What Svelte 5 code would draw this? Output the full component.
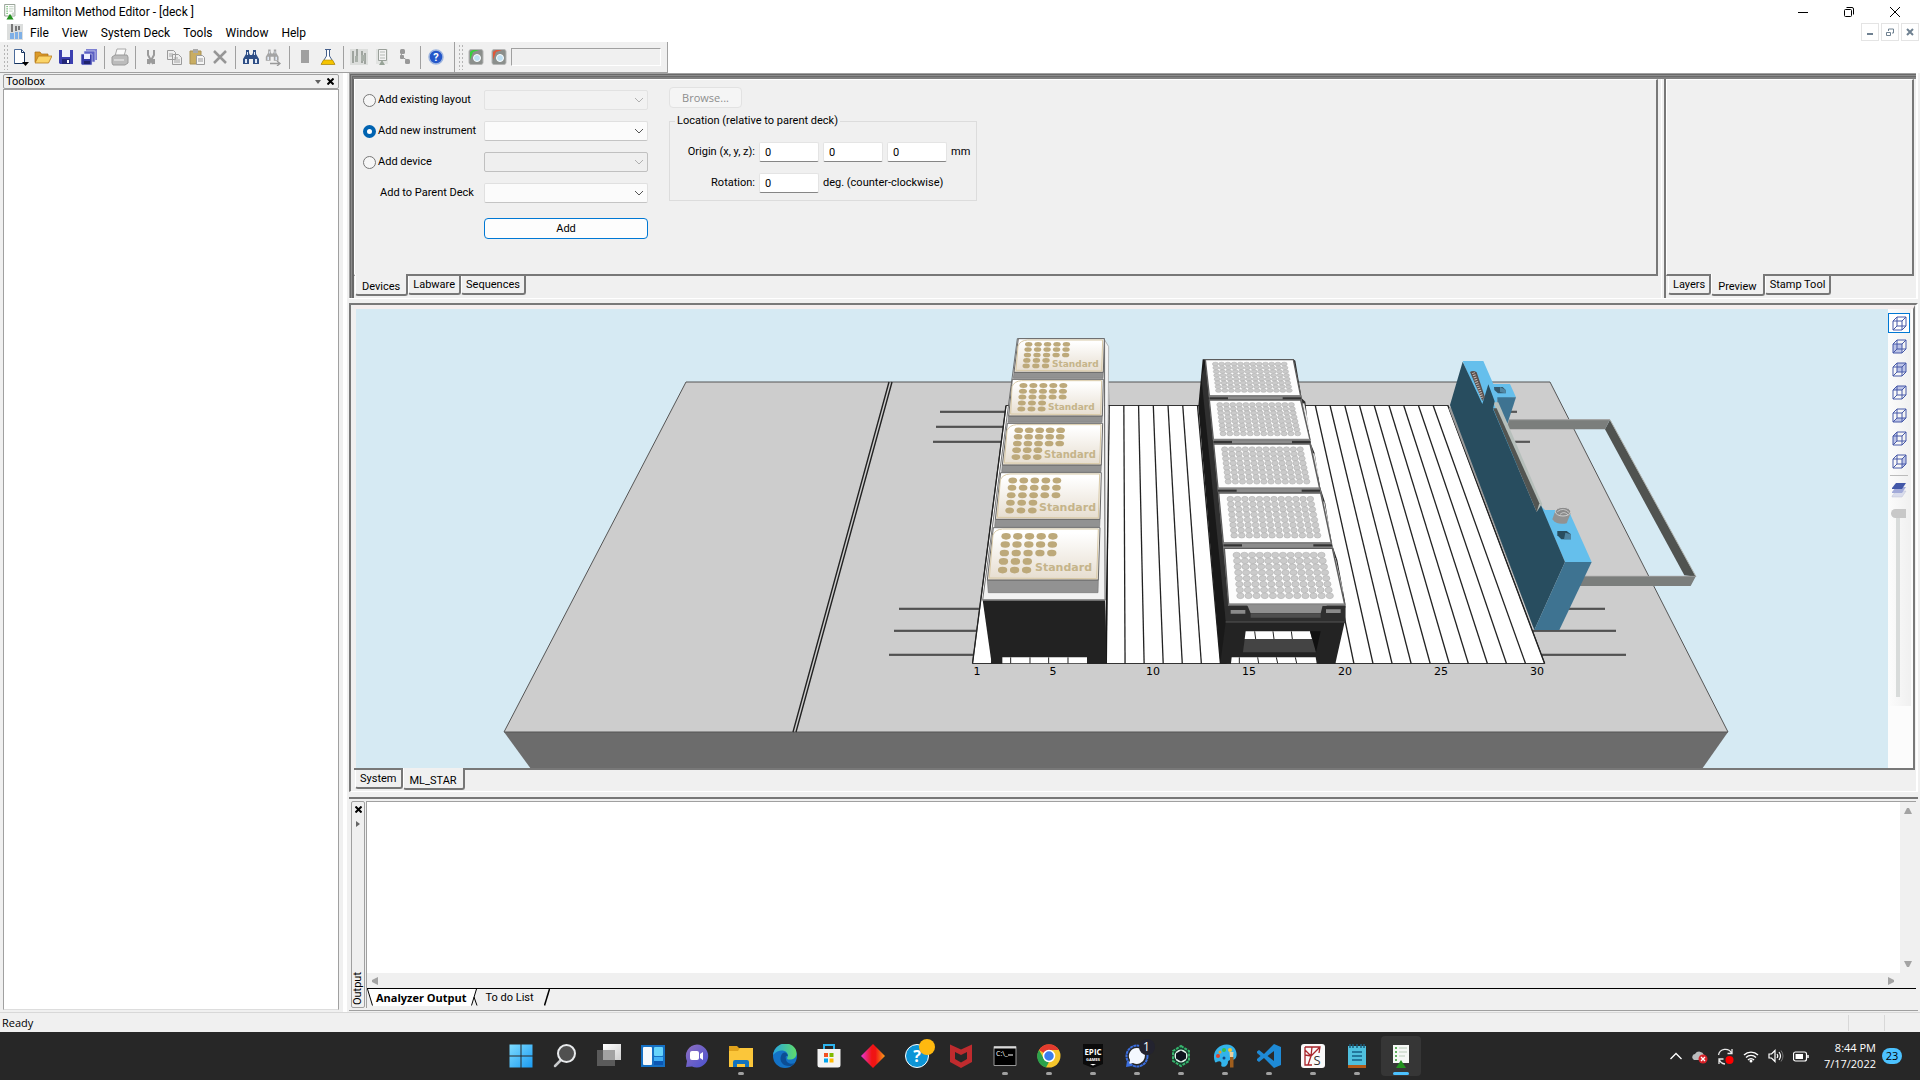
<script>
  const menus = ['File', 'View', 'System Deck', 'Tools', 'Window', 'Help'];

  const lerp = (a, b, t) => a + (b - a) * t;
  // corner order: top-left, top-right, bottom-right, bottom-left
  function at(q, u, v) {
    return {
      x: lerp(lerp(q[0], q[2], u), lerp(q[6], q[4], u), v),
      y: lerp(q[1], q[5], v)
    };
  }
  const pts = (q) => q.join(' ');

  const tipRacks = [
    { q: [175, 56, 433, 56, 430, 157, 162, 157], b: 175, rx: 11, ry: 7, tx: 1052, ty: 367, fs: 9 },
    { q: [157, 178, 430, 178, 427, 288, 146, 288], b: 307, rx: 12, ry: 7.5, tx: 1048, ty: 410, fs: 9 },
    { q: [142, 310, 428, 310, 424, 435, 127, 435], b: 455, rx: 13, ry: 8.5, tx: 1044, ty: 458, fs: 10 },
    { q: [122, 458, 424, 458, 420, 598, 106, 598], b: 620, rx: 13, ry: 9, tx: 1039, ty: 511, fs: 11 },
    { q: [100, 623, 420, 623, 415, 780, 82, 780], b: 818, rx: 14, ry: 10, tx: 1035, ty: 571, fs: 11 }
  ].map((r) => {
    const dots = [];
    [0.166, 0.322, 0.484, 0.645, 0.81].forEach((v, row) => {
      for (let c = 0; c < (row < 3 ? 5 : 3); c++) dots.push(at(r.q, 0.128 + c * 0.109, v));
    });
    return { ...r, dots };
  });

  const plates = [
    { q: [736, 119, 1000, 119, 1022, 228, 748, 228], rx: 9, ry: 5.5 },
    { q: [748, 240, 1022, 240, 1050, 359, 760, 359], rx: 9, ry: 6.5 },
    { q: [761, 372, 1050, 372, 1079, 505, 774, 505], rx: 9.5, ry: 7.5 },
    { q: [776, 519, 1082, 519, 1114, 669, 790, 669], rx: 10, ry: 8 },
    { q: [793, 685, 1117, 685, 1154, 853, 806, 853], rx: 11, ry: 8.5 }
  ].map((p) => {
    const wells = [];
    for (let r = 0; r < 8; r++)
      for (let c = 0; c < 12; c++) wells.push(at(p.q, 0.108 + c * 0.0708, 0.12 + r * 0.104));
    return { ...p, wells };
  });

  const tracks = Array.from({ length: 31 }, (_, i) => ({ a: 1006 + i * 14.73, b: 972.5 + i * 19.07 }));
  const labels = [[1, 977], [5, 1053], [10, 1153], [15, 1249], [20, 1345], [25, 1441], [30, 1537]];
  const rails = [
    [940, 1005, 412], [936, 1003, 427], [933, 1001, 442], [899, 980, 609], [894, 976, 631], [889, 973, 655],
    [1505, 1517, 412], [1515, 1530, 442], [1568, 1605, 609], [1533, 1616, 631], [1542, 1626, 655]
  ];
  const faces = [
    '', '1,5 10,5 10,14 1,14', '5,1 14,1 14,10 5,10', '1,5 5,1 14,1 10,5',
    '1,14 5,10 14,10 10,14', '1,5 5,1 5,10 1,14', '10,5 14,1 14,10 10,14'
  ];
  const views = ['Perspective', 'Front', 'Back', 'Top', 'Bottom', 'Left', 'Right'];
  const tasks = [
    'start', 'search', 'desktops', 'widgets', 'chat', 'files', 'edge', 'store', 'diamond', 'help', 'mcafee',
    'terminal', 'chrome', 'epic', 'signal', 'hex', 'paint', 'code', 'spyder', 'notepad', 'editor'
  ];
  const running = new Set(['files', 'terminal', 'chrome', 'epic', 'signal', 'hex', 'paint', 'code', 'spyder', 'notepad', 'editor']);
  const tools = [
    'new', 'open', 'save', 'saveall', '|', 'print', '|', 'cut', 'copy', 'paste', 'delete', '|', 'find', 'findnext',
    '|', 'stop', 'flask', '|', 'tubes', 'method', 'flow', '|', 'help'
  ];
  let choice = $state('instrument');
</script>

{#snippet combo(id, label, kind)}
  <span class="combo {kind}">
    <select {id} aria-label={label} disabled={kind !== ''}><option></option></select>
    <svg width="10" height="6" viewBox="0 0 10 6"><path d="M1 1l4 4 4-4" fill="none" stroke="currentColor" /></svg>
  </span>
{/snippet}

{#snippet toolIcon(n)}
  <svg width="18" height="18" viewBox="0 0 18 18" aria-hidden="true">
    {#if n === 'new'}
      <path d="M3.5 1.5h7l3 3v11h-10z" fill="#fff" stroke="#4b6b9b" /><path d="M10.5 1.5v3h3v11h-10" fill="none" stroke="#16325c" /><path d="M11 14h7l-3.500 4z" fill="#000" />
    {:else if n === 'open'}
      <path d="M1 14V4h5l1.500 2H14v8z" fill="#dc9a28" stroke="#a86a12" stroke-width=".7" /><path d="M1 15l3.500-7H18l-3.500 7z" fill="#fbd468" stroke="#b67a1c" stroke-width=".8" />
    {:else if n === 'save'}
      <path d="M2 2h14v14H3l-1-1z" fill="#3b3fb0" /><path d="M5 2h8v7H5z" fill="#eef1fb" /><path d="M5 11h8v5H5z" fill="#242878" /><path d="M10 12h2v3h-2z" fill="#fff" />
    {:else if n === 'saveall'}
      <path d="M6 1h11v11H6z" fill="#7d80d2" /><path d="M4 3h11v11H4z" fill="#5c60c4" stroke="#dfe0f6" stroke-width=".6" /><path d="M1 6h11v11H2l-1-1z" fill="#3439a6" stroke="#dfe0f6" stroke-width=".6" /><path d="M4 6h6v5H4z" fill="#eef" /><path d="M4 13h6v3H4z" fill="#20246c" />
    {:else if n === 'print'}
      <path d="M6 1h9l-2 7H4z" fill="#fafafa" stroke="#a8a8a8" /><path d="M1 9l3-2h12l1 2v6l-3 2H2l-1-2z" fill="#bcbcbc" stroke="#9a9a9a" /><path d="M3 12h10" stroke="#f4f4f4" />
    {:else if n === 'cut'}
      <path d="M6 2v5l5 9M12 2v5l-5 9" fill="none" stroke="#9b9b9b" stroke-width="2" /><path d="M5 11h3v5H5zM10 11h3v5h-3z" fill="#9b9b9b" />
    {:else if n === 'copy'}
      <path d="M2.500 2.500h6l2 2v7h-8zM7.500 6.500h6l3 3v7h-9z" fill="#eee" stroke="#9b9b9b" /><path d="M4 6h4M4 8h3M9 10h4M9 12h6M9 14h6" stroke="#a5a5a5" />
    {:else if n === 'paste'}
      <path d="M2 3h11v13H2z" fill="#c9ad62" stroke="#a79055" /><path d="M5 1h5v4H5z" fill="#a9a9a9" /><path d="M8.500 7.500h6l2 2v7h-8z" fill="#f5f5f5" stroke="#9b9b9b" /><path d="M10 11h5M10 13h5" stroke="#999" />
    {:else if n === 'delete'}
      <path d="M3 3l12 12M15 3L3 15" stroke="#969696" stroke-width="2.500" />
    {:else if n === 'find' || n === 'findnext'}
      <g fill={n === 'find' ? '#2f4f86' : '#a4a4a4'} transform={n === 'find' ? '' : 'scale(.8)'}><path d="M4 2h3v3l1 2h2l1-2V2h3v4l3 5v5h-6v-5H7v5H1v-5l3-5z" /><path d="M3 11h2v4H3zM13 11h2v4h-2zM5 4h1v3H5zM12 4h1v3h-1z" fill="#dfe8f6" /></g>
      {#if n === 'findnext'}<path d="M5 15.500h9M12 13l3 2.500-3 2.500" fill="none" stroke="#999" stroke-width="1.300" />{/if}
    {:else if n === 'stop'}
      <path d="M5 2h8v13H5z" fill="#a0a0a0" />
    {:else if n === 'flask'}
      <path d="M6 1.500h6M7.500 2v6l-5 8h13l-5-8V2" fill="#fff" stroke="#45608c" /><path d="M4.500 12h9l2.500 4.500H2z" fill="#f5c400" stroke="#b38a00" stroke-width=".6" />
    {:else if n === 'tubes'}
      <path d="M0 1h18v16H0z" fill="#dcdedc" /><path d="M3 3v12M7 1v12M12 3v12M15 5v11" stroke="#8b918b" stroke-width="1.500" /><path d="M5 8h3v6H5zM11 7h4v6h-4z" fill="#a9b0a9" />
    {:else if n === 'method'}
      <path d="M3 1h12v15H3z" fill="#e2e4e2" /><path d="M5.500 1.500h8v11h-8z" fill="#f3f3f3" stroke="#9aa09a" /><path d="M7 4h5M7 7h5M7 10h5" stroke="#b5bab5" /><path d="M6 17l3-5 3 5z" fill="#97a397" />
    {:else if n === 'flow'}
      <path d="M6 4l-1 4 7 5" stroke="#989898" fill="none" /><rect x="4" y="1" width="5" height="5" rx="1.500" fill="#989898" /><rect x="4" y="7" width="4" height="4" rx="1" fill="#989898" /><rect x="9" y="11" width="5" height="5" rx="1.500" fill="#989898" />
    {:else if n === 'help'}
      <circle cx="9" cy="9" r="7" fill="#2457c9" stroke="#9fb6df" stroke-width="1.500" /><text x="9" y="13" text-anchor="middle" font-size="11" font-weight="700" fill="#fff">?</text>
    {:else}
      <rect x="2" y="1.500" width="14" height="15" rx="2" fill="#8b8f8c" stroke="#b5b5b5" /><path d="M3 12V4l3-2h6L6 4z" fill={n === 'go' ? '#36d13b' : '#e0573a'} /><circle cx="10" cy="10" r="3.500" fill="#bfe0f2" stroke="#fff" />
    {/if}
  </svg>
{/snippet}

{#snippet docIcon(s)}
  <svg width={s} height={s} viewBox="0 0 18 18" aria-hidden="true">
    <path d="M3 .5h11.500v13H3z" fill="#fff" stroke="#8a968a" /><path d="M5 3h1.500M5 5.500h1.500M5 8h1.500M5 10.500h1.500" stroke="#2e9a2e" /><path d="M8 3h5M8 5.500h5M8 8h4" stroke="#b9cbb9" /><path d="M11 10l3-1v5h-3z" fill="#cfd6cf" /><path d="M5 17.500L9 11l4 6.500z" fill="#23921f" />
  </svg>
{/snippet}

{#snippet taskIcon(n)}
  <svg width="24" height="24" viewBox="0 0 24 24" aria-hidden="true">
    {#if n === 'start'}
      <path d="M.5.5h11v11H.5zM12.500.5h11v11h-11zM.5 12.500h11v11H.5zM12.500 12.500h11v11h-11z" fill="url(#win)" />
    {:else if n === 'search'}
      <path d="M2 22l7-7" stroke="#c8cacc" stroke-width="2.500" stroke-linecap="round" /><circle cx="13.500" cy="9.500" r="8.500" fill="#505050" stroke="#e8eaec" stroke-width="2" />
    {:else if n === 'desktops'}
      <path d="M6 0h18v16H6z" fill="url(#pale)" /><path d="M0 6h18v16H0z" fill="#686868" opacity=".8" /><path d="M6 6h12v10H6z" fill="#a2a2a2" />
    {:else if n === 'widgets'}
      <path d="M0 1h24v22H0z" fill="#1570c4" /><rect x="2" y="3" width="9" height="18" rx="1" fill="#f4f8fc" /><rect x="13" y="3" width="9" height="9" rx="1" fill="#66d3fb" /><rect x="13" y="13" width="9" height="4" fill="#3fb0f6" /><rect x="13" y="17" width="9" height="4" fill="#0b56b3" />
    {:else if n === 'chat'}
      <path d="M12 .5A11.500 11.500 0 1 1 7 22.500L1 23l1-6A11.500 11.500 0 0 1 12 .5z" fill="url(#chat)" /><rect x="5" y="7" width="9" height="9" rx="2" fill="#fff" /><path d="M15 10l3-2v8l-3-2z" fill="#fff" />
    {:else if n === 'files'}
      <path d="M0 2h8l2 2h14v19H0z" fill="#e0a21c" /><path d="M0 7h9l2-3h13v19H0z" fill="#fbc63a" /><path d="M4 23v-5a2 2 0 0 1 2-2h12a2 2 0 0 1 2 2v5h-4v-3H8v3z" fill="#1173c0" />
    {:else if n === 'edge'}
      <circle cx="12" cy="12" r="12" fill="#1372c6" /><path d="M0 11C2-2 17-4 22.500 5c3 7-1 11-7 10.500-2-.5-1.500-2-.5-3.500 0-6-9-8-15-1z" fill="url(#edge)" /><path d="M8 12c-2 5 2 11 10 10l4-3c-4 2-9 0-9-4-1-2 0-4 2-3-1-4-5-5-7 0z" fill="#0c4d94" />
    {:else if n === 'store'}
      <path d="M7 5V1h10v4" fill="none" stroke="#2db4ee" stroke-width="2" /><path d="M.5 5h23v16a2.500 2.500 0 0 1-2.500 2.500H3A2.500 2.500 0 0 1 .5 21z" fill="#f3f3f3" /><path d="M7 9h4v4H7z" fill="#f25022" /><path d="M12.500 9h4v4h-4z" fill="#7fba00" /><path d="M7 14.500h4v4H7z" fill="#00a4ef" /><path d="M12.500 14.500h4v4h-4z" fill="#ffb900" />
    {:else if n === 'diamond'}
      <path d="M12 0l12 12-12 12L0 12z" fill="url(#dia)" />
    {:else if n === 'help'}
      <circle cx="12" cy="12" r="11.500" fill="#0d95d6" stroke="#fff" /><text x="12" y="18" text-anchor="middle" font-size="16" font-weight="700" fill="#fff">?</text>
    {:else if n === 'mcafee'}
      <path d="M1 .5l11 5 11-5v17.500L12 24 1 18zM6 8v7l6 3.500 6-3.500V8l-6 3z" fill="#bf2b2e" fill-rule="evenodd" />
    {:else if n === 'terminal'}
      <path d="M1 2.500h22v19H1z" fill="#000" stroke="#999" /><path d="M1 2.500h22v2H1z" fill="#d8d8d8" /><text x="3" y="12" font-size="7" fill="#fff">C:\_</text><path d="M15 11h5" stroke="#fff" />
    {:else if n === 'chrome'}
      <circle cx="12" cy="12" r="11.500" fill="#f5c52c" /><path d="M2 6a11.500 11.500 0 0 1 20 0H12v6z" fill="#e33b2e" /><path d="M2 6l5 9 5 3-3 5.500A11.500 11.500 0 0 1 2 6z" fill="#2ba24c" /><circle cx="12" cy="12" r="5.500" fill="#3b7ded" stroke="#fff" stroke-width="1.500" />
    {:else if n === 'epic'}
      <path d="M2 0h20v20l-10 4-10-4z" fill="#0b0b0b" /><text x="12" y="11" text-anchor="middle" font-size="8" font-weight="700" fill="#fff">EPIC</text><text x="12" y="17" text-anchor="middle" font-size="4" font-weight="700" fill="#fff">GAMES</text><path d="M9 20l3 1.500 3-1.500z" fill="#fff" />
    {:else if n === 'signal'}
      <circle cx="12" cy="12" r="10.500" fill="none" stroke="#3b6fe0" stroke-width="2" stroke-dasharray="3 .5" /><path d="M12 4a8 8 0 1 1-4 15l-4 1 1-4a8 8 0 0 1 7-12z" fill="#f4f8ff" /><path d="M1 23l1-6 5 5z" fill="#3b6fe0" />
    {:else if n === 'hex'}
      <path d="M12 2l8 5v10l-8 5-8-5V7z" fill="#123d2c" stroke="#36b46c" stroke-width="2" stroke-dasharray="3 1" /><circle cx="12" cy="12" r="6.500" fill="#dff2e8" /><path d="M12 6.500l5 3v5l-5 3-5-3v-5z" fill="#10131f" />
    {:else if n === 'paint'}
      <path d="M2 18C-2 8 6 0 14 .5c8 .5 11 8 9 13-2 4-7 1-8 4 0 4-3 6-6 5-2-1 1-4-2-5-2-1-4 2-5 .5z" fill="#33b3ea" /><circle cx="11" cy="6" r="2" fill="#35c24c" /><circle cx="5" cy="12" r="2" fill="#e0412b" /><circle cx="17" cy="6" r="2" fill="#f7c331" /><circle cx="7" cy="8" r="1.500" fill="#f09a24" /><circle cx="11" cy="14" r="1.500" fill="#144a86" /><path d="M16.500 8h4l-.5 6h-3z" fill="#e8cfa0" /><path d="M17 13h3.500v10.500H17z" fill="#a05e1d" />
    {:else if n === 'code'}
      <path d="M17 0l7 3v18l-7 3L7 14l-5 4-2-1.500v-9L2 6l5 4z" fill="#1e8ad6" /><path d="M17 7v10l-6.500-5z" fill="#2b2b2b" /><path d="M0 9v6l3.500-3z" fill="#2b2b2b" />
    {:else if n === 'spyder'}
      <rect width="24" height="24" rx="3" fill="#fafafa" /><path d="M4 3h15l-1 6M4 3v18h7M4 11l6 1 8-8M11 3l-1 9-3 9M4 6l6 6" fill="none" stroke="#a9262c" stroke-width="1.300" /><text x="16" y="21" text-anchor="middle" font-size="13" fill="#333">S</text>
    {:else if n === 'notepad'}
      <path d="M3 2h18v19H3z" fill="#4fc0de" /><path d="M3 21h18v3H3z" fill="#b45a18" /><path d="M5 0v4M8 0v4M12 0v4M16 0v4M19 0v4" stroke="#1b5d7c" stroke-width="1.500" /><path d="M7 8h10M7 12h10M7 16h10" stroke="#155f86" stroke-width="1.500" />
    {:else}
      <path d="M4 1h16v18H4z" fill="#f5f7f5" /><path d="M6 4h2M6 8h2M6 12h2M6 16h2" stroke="#2e9a2e" stroke-width="1.500" /><path d="M10 4h8M10 8h8M10 12h6" stroke="#b9cbb9" /><path d="M7 24l5-8 5 8z" fill="#23921f" />
    {/if}
  </svg>
{/snippet}

<svg class="defs" width="0" height="0" aria-hidden="true">
  <defs>
    <linearGradient id="win" x2="1" y2="1"><stop stop-color="#7fdcff" /><stop offset="1" stop-color="#1a9bf2" /></linearGradient>
    <linearGradient id="pale" x2="1" y2="1"><stop stop-color="#fff" /><stop offset="1" stop-color="#cfcfcf" /></linearGradient>
    <linearGradient id="chat" x2="1" y2="1"><stop stop-color="#8f6fc0" /><stop offset="1" stop-color="#4a52cf" /></linearGradient>
    <linearGradient id="edge" x2="1"><stop stop-color="#27a5e0" /><stop offset="1" stop-color="#5fdc6a" /></linearGradient>
    <linearGradient id="dia" x2="1"><stop stop-color="#e438d8" /><stop offset=".45" stop-color="#f01414" /><stop offset=".6" stop-color="#f01414" /><stop offset="1" stop-color="#f5a01a" /></linearGradient>
    <linearGradient id="rack" x2="0" y2="1"><stop offset=".1" stop-color="#fff" /><stop offset="1" stop-color="#e6ddcf" /></linearGradient>
  </defs>
</svg>

<div class="app">
  <header class="title">
    {@render docIcon(16)}
    <span class="grow">Hamilton Method Editor - [deck ]</span>
    <button aria-label="Minimize"><svg width="12" height="12"><path d="M1 6.500h10" stroke="#000" /></svg></button>
    <button aria-label="Restore"><svg width="12" height="12"><rect x="1.500" y="3.500" width="7" height="7" rx="1" fill="none" stroke="#000" /><path d="M3.500 1.500H9a1.500 1.500 0 0 1 1.500 1.500v5.500" fill="none" stroke="#000" /></svg></button>
    <button aria-label="Close"><svg width="12" height="12"><path d="M1 1l10 10M11 1L1 11" stroke="#000" /></svg></button>
  </header>

  <nav class="menu">
    <svg width="16" height="16" viewBox="0 0 16 16" aria-hidden="true"><path d="M0 0h16v16H0z" fill="#dcdedd" /><path d="M5 0v8M9 2v5M12 2v4" stroke="#555" stroke-width="1.500" /><path d="M3 9h4v6H3zM8 8h3v7H8zM12 8h3v7h-3z" fill="#7fb0e6" /></svg>
    {#each menus as m}<button>{m}</button>{/each}
    <span class="grow"></span>
    <span class="mdi">
      <button aria-label="Minimize document"><svg width="8" height="8"><path d="M1 6h6" stroke="#6f8191" stroke-width="2" /></svg></button>
      <button aria-label="Restore document"><svg width="8" height="8"><path d="M.5 4.500h4v3h-4zM2.500 3V1h5v4H6" fill="none" stroke="#6f8191" /></svg></button>
      <button aria-label="Close document"><svg width="8" height="8"><path d="M1 1l6 6M7 1L1 7" stroke="#6f8191" stroke-width="2" /></svg></button>
    </span>
  </nav>

  <div class="toolbars">
    <div class="toolbar main-tools">
      <span class="grip"></span>
      {#each tools as t}
        {#if t === '|'}<span class="sep"></span>{:else}<button aria-label={t}>{@render toolIcon(t)}</button>{/if}
      {/each}
    </div>
    <div class="toolbar run-tools">
      <span class="grip"></span>
      <button aria-label="Start">{@render toolIcon('go')}</button>
      <button aria-label="Abort">{@render toolIcon('halt')}</button>
      <input class="status-field" aria-label="Run status" disabled />
    </div>
  </div>

  <main>
    <aside class="toolbox">
      <div class="caption">
        <span class="grow">Toolbox</span>
        <button aria-label="Toolbox options"><svg width="6" height="4"><path d="M0 0h6L3 4z" fill="#606060" /></svg></button>
        <button aria-label="Close toolbox"><svg width="7" height="7"><path d="M.5.5l6 6M6.500.5l-6 6" stroke="#000" stroke-width="2" /></svg></button>
      </div>
      <div class="toolbox-body"></div>
    </aside>

    <section class="work">
      <div class="upper">
        <div class="pane devices">
          <div class="page">
            <form class="left" onsubmit={(e) => e.preventDefault()}>
              <label><input type="radio" name="kind" value="layout" bind:group={choice} />Add existing layout</label>
              {@render combo('layout', 'Existing layout', 'off')}
              <label><input type="radio" name="kind" value="instrument" bind:group={choice} />Add new instrument</label>
              {@render combo('instrument', 'New instrument', '')}
              <label><input type="radio" name="kind" value="device" bind:group={choice} />Add device</label>
              {@render combo('device', 'Device', 'off edge')}
              <label class="indent" for="parent">Add to Parent Deck</label>
              {@render combo('parent', 'Add to Parent Deck', '')}
              <button class="add">Add</button>
            </form>
            <div class="right">
              <button class="browse" disabled>Browse...</button>
              <fieldset>
                <legend>Location (relative to parent deck)</legend>
                <div class="field-row">
                  <label for="ox">Origin (x, y, z):</label>
                  <input id="ox" value="0" /><input aria-label="Origin y" value="0" /><input aria-label="Origin z" value="0" />
                  <span>mm</span>
                </div>
                <div class="field-row">
                  <label for="rot">Rotation:</label><input id="rot" value="0" /><span>deg. (counter-clockwise)</span>
                </div>
              </fieldset>
            </div>
          </div>
          <div class="tabs"><button class="on">Devices</button><button>Labware</button><button>Sequences</button></div>
        </div>
        <div class="pane preview">
          <div class="page"></div>
          <div class="tabs"><button>Layers</button><button class="on">Preview</button><button>Stamp Tool</button></div>
        </div>
      </div>

      <div class="deck-pane">
        <div class="deck-frame">
          <svg class="scene" viewBox="356 309 1532 459" preserveAspectRatio="xMidYMid slice" role="img" aria-label="Deck layout">
            <path d="M504 732H1728L1702 769H531z" fill="#6c6c6c" />
            <path d="M686 382H1550L1728 732H504z" fill="#cdcdcd" stroke="#555" />
            <path d="M889 382L793 732M892 382L796 732" stroke="#222" stroke-width="1.400" fill="none" />
            {#each rails as r}
              <path d="M{r[0]} {r[2] - 1}H{r[1]}" stroke="#888" /><path d="M{r[0]} {r[2]}H{r[1]}" stroke="#333" stroke-width="1.400" />
            {/each}
            <path d="M1006 405.500H1448L1544.700 663.500H972.500z" fill="#fff" stroke="#333" />
            {#each tracks as t}<path d="M{t.a} 405.500L{t.b} 663.500" stroke="#222" stroke-width="1.300" />{/each}
            {#each labels as l}<text class="num" x={l[1]} y="675" text-anchor="middle">{l[0]}</text>{/each}

            <g transform="translate(960 320) scale(.333333)">
              <path d="M434 60L446 80L441 840H435z" fill="#f4f4f4" stroke="#999" stroke-width="2" />
              <path d="M449 195L441 1030H434L440 700z" fill="#151515" />
              <path d="M172 56L433 56L435 840H68z" fill="#f2f2f2" stroke="#333" stroke-width="2" />
              <path d="M68 840H435L440 1031H95z" fill="#222" /><path d="M68 840H435" stroke="#888" stroke-width="4" />
              <path d="M127 1012H381V1030H127z" fill="#fff" />
              <path d="M152 1012V1030M210 1012V1030M266 1012V1030M324 1012V1030" stroke="#222" stroke-width="3" />
              {#each tipRacks as r}
                <polygon points="{r.q[6]} {r.q[7]} {r.q[4]} {r.q[5]} {r.q[4] - 1} {r.b} {r.q[6] + (r.b > 800 ? 3 : -2)} {r.b}" fill="#929292" stroke="#777" stroke-width="2" />
                <polygon points={pts(r.q)} fill="url(#rack)" stroke="#666" stroke-width="3" />
                <path d="M{r.q[6] + 6} {r.q[7] - 6}L{r.q[0] - 1} {r.q[1] + 22}Q{r.q[0] + 6} {r.q[1] + 5} {r.q[0] + 28} {r.q[1] + 4}H{r.q[2] - 5}L{r.q[4] - 5} {r.q[5] - 4}z" fill="none" stroke="#d8c9a6" stroke-width="3" />
                {#each r.dots as d}<ellipse cx={d.x} cy={d.y} rx={r.rx} ry={r.ry} fill="#bda97a" />{/each}
              {/each}

              <path d="M728 118H740L800 690V1031H781L715 258z" fill="#191919" />
              <path d="M738 130L806 850V900H797L724 170z" fill="#303030" />
              <path d="M1000 118L1006 122L1025 235L1036 245L1050 365L1064 400L1080 500L1096 550L1115 670L1132 720L1156 850V905H1120z" fill="#2b2b2b" />
              <path d="M1030 250L1046 330M1060 400L1074 470M1090 545L1108 640M1124 715L1146 815" stroke="#e8e8e8" stroke-width="6" />
              <path d="M736 119H1000L1156 858H806z" fill="#8c8c8c" />
              {#each plates as p}
                <path d="M{p.q[6]} {p.q[7] + 7}H{p.q[6] + 56}M{p.q[4] - 54} {p.q[5] + 7}H{p.q[4] + 2}" stroke="#333" stroke-width="7" />
                <polygon points={pts(p.q)} fill="#fdfdfd" stroke="#5c5c5c" stroke-width="4" />
                <path d="M{p.q[6]} {p.q[7]}H{p.q[4]}" stroke="#868686" stroke-width="5" />
                {#each p.wells as w}<ellipse cx={w.x} cy={w.y} rx={p.rx} ry={p.ry} fill="#cbcbcb" stroke="#ababab" stroke-width="1.500" />{/each}
              {/each}
              <path d="M797 858H1156V908H797z" fill="#2e2e2e" />
              <path d="M862 856H1088L1082 880H872z" fill="#8f8f8f" /><path d="M872 881H1082V893H872z" fill="#4e4e4e" />
              <path d="M812 870H856V881H812zM1098 868H1142V879H1098z" fill="#8a8a8a" />
              <path d="M797 906H1154L1126 1031H781z" fill="#232323" /><path d="M797 906H1154" stroke="#555" stroke-width="3" />
              <path d="M857 934H1050L1056 957H854z" fill="#fff" /><path d="M884 934L887 957M939 934L942 957M994 934L997 957" stroke="#222" stroke-width="3" />
              <path d="M854 957H1062L1068 997H849z" fill="#444" /><path d="M1050 934H1082L1068 997z" fill="#111" />
              <path d="M815 1012H1067L1070 1030H813z" fill="#fff" />
              <path d="M838 1012V1030M893 1012L896 1030M949 1012L953 1030M1006 1012L1010 1030" stroke="#222" stroke-width="3" />
            </g>
            {#each tipRacks as r}<text class="std" x={r.tx} y={r.ty} font-size={r.fs}>Standard</text>{/each}

            <g transform="translate(1400 340) scale(.333333)">
              <path d="M327 238H630L615 268H320z" fill="#7b7e7c" /><path d="M327 239H630" stroke="#aaa" stroke-width="3" />
              <path d="M630 239L888 710L853 706L615 268z" fill="#505350" /><path d="M630 239L888 710" stroke="#b0b4b0" stroke-width="3" />
              <path d="M540 708H888L872 738H540z" fill="#7b7e7c" /><path d="M545 709H888" stroke="#999" stroke-width="3" />
              <path d="M146 205L156 200L404 850L400 862z" fill="#9a9a9a" />
              <path d="M188 63H250L280 132H330L348 172L292 176L290 190L420 495L435 510H505L575 666H495L423 500L240 190z" fill="#65bfec" />
              <path d="M292 172H348L322 252L292 190z" fill="#3e7391" />
              <path d="M280 187H295L427 493L412 516z" fill="#b6bfbb" /><path d="M279 205L290 205L418 490L410 516z" fill="#525552" />
              <path d="M188 65L150 195L403 870L495 666L423 496L410 516L279 207L284 184L265 133L247 192z" fill="#284d5f" />
              <path d="M495 666H575L478 870H403z" fill="#3e7391" />
              <path d="M210 96Q220 90 230 97L255 172L247 183z" fill="#59504d" /><path d="M220 98L248 178" stroke="#c8b9b4" stroke-width="9" stroke-dasharray="3 4" />
              <path d="M282 141H308L317 150V160H294L283 150z" fill="#35596d" /><path d="M300 141L317 150V160L300 156z" fill="#5288a3" />
              <path d="M472 573H500L513 583V598H484L472 586z" fill="#294d5e" /><path d="M496 578L513 583V598H492z" fill="#4d83a0" />
              <path d="M466 512L457 538Q470 556 500 550L512 520z" fill="#929292" /><ellipse cx="489" cy="515" rx="23" ry="13" fill="#8a8a8a" stroke="#cfcfcf" stroke-width="3" /><path d="M472 515Q490 500 508 518M480 523Q492 512 504 524" fill="none" stroke="#e0e0e0" stroke-width="2" />
            </g>
          </svg>
          <div class="view-tools">
            <div class="view-bar">
              {#each views as v, i}
                <button class:sel={i === 0} aria-label={v}>
                  <svg width="15" height="15" viewBox="0 0 15 15">
                    {#if faces[i]}<polygon points={faces[i]} fill="#bcc3e6" />{/if}
                    <path d="M1 5h9v9H1zM5 1h9v9H5zM1 5l4-4M10 5l4-4M1 14l4-4M10 14l4-4" fill="none" stroke="#4658a8" />
                  </svg>
                </button>
              {/each}
              <hr />
              <button aria-label="Layers"><svg width="16" height="16"><path d="M1 14l4-5h10l-4 6H1z" fill="#d9dcec" stroke="#bfc3d6" stroke-width=".5" /><path d="M1 10l4-5h10l-4 6H1z" fill="#a3abd9" /><path d="M1 6l4-5h10l-4 6H1z" fill="#4358a8" /></svg></button>
              <input type="range" aria-label="Layer height" min="0" max="100" value="100" disabled />
            </div>
          </div>
        </div>
        <div class="tabs"><button>System</button><button class="on">ML_STAR</button></div>
      </div>

      <div class="output">
        <div class="strip">
          <button aria-label="Close output"><svg width="7" height="7"><path d="M.5.5l6 6M6.500.5l-6 6" stroke="#000" stroke-width="2" /></svg></button>
          <button aria-label="Pin output"><svg width="4" height="6"><path d="M0 0l4 3-4 3z" fill="#666" /></svg></button>
          <span>Output</span>
        </div>
        <div class="log">
          <div class="log-row">
            <textarea aria-label="Analyzer output" readonly></textarea>
            <div class="vscroll">
              <svg width="8" height="6"><path d="M0 6l3-6h2l3 6z" fill="#a3a3a3" /></svg>
              <svg width="8" height="6"><path d="M0 0h8L5 6H3z" fill="#a3a3a3" /></svg>
            </div>
          </div>
          <div class="hscroll">
            <svg width="6" height="8"><path d="M6 0v8L0 5V3z" fill="#a3a3a3" /></svg>
            <svg width="6" height="8"><path d="M0 0v8l6-3V3z" fill="#a3a3a3" /></svg>
          </div>
          <div class="log-tabs">
            <svg width="6" height="17"><path d="M0 0h6v17z" fill="#fff" /><path d="M.5 0l5 16.500" stroke="#000" /></svg>
            <button class="cur">Analyzer Output</button>
            <svg width="7" height="17"><path d="M0 0h5L1 17H0z" fill="#fff" /><path d="M5.500 0L.5 16.500M3 8l3 8.500" stroke="#000" fill="none" /></svg>
            <button class="todo">To do List</button>
            <svg width="6" height="17"><path d="M5.500 0L.5 16.500" stroke="#000" stroke-width="1.500" /></svg>
          </div>
        </div>
      </div>
    </section>
  </main>

  <footer class="status"><span class="grow">Ready</span><i></i><i></i></footer>

  <div class="taskbar">
    <span></span>
    <div class="apps">
      {#each tasks as t}
        <button class:active={t === 'editor'} aria-label={t}>
          {@render taskIcon(t)}
          {#if running.has(t)}<span class="dot"></span>{/if}
          {#if t === 'help'}<span class="badge gold"></span>{/if}
          {#if t === 'signal'}<span class="badge dark">1</span>{/if}
        </button>
      {/each}
    </div>
    <div class="tray">
      <svg width="12" height="8"><path d="M.5 7L6 1.500 11.500 7" fill="none" stroke="#fff" stroke-width="1.300" /></svg>
      <svg width="17" height="15"><path d="M2 10a3 3 0 0 1 2-5 5 5 0 0 1 9 1v5H3z" fill="#b9bcbd" /><circle cx="12" cy="10" r="4.500" fill="#d8232a" /><path d="M10 8l4 4M14 8l-4 4" stroke="#fff" stroke-width="1.300" /></svg>
      <svg width="17" height="17"><path d="M1.500 7a7 7 0 0 1 13-2M15 1v4.500h-4.500M2 16v-5h4.500M2 11a7 7 0 0 0 6 5" fill="none" stroke="#e8e8e8" stroke-width="1.300" /><circle cx="12.500" cy="12" r="4" fill="#f00" /></svg>
      <svg width="16" height="13"><path d="M1 5a10 10 0 0 1 14 0M3 7.500a7 7 0 0 1 10 0M5 10a4 4 0 0 1 6 0" fill="none" stroke="#fff" stroke-width="1.400" /><circle cx="8" cy="11" r="1.500" fill="#fff" /></svg>
      <svg width="16" height="14"><path d="M1 5h2.500L7 1.500v11L3.500 9H1z" fill="none" stroke="#fff" stroke-width="1.200" /><path d="M9 5q1.500 2 0 4M11 3q3 4 0 8" fill="none" stroke="#fff" stroke-width="1.200" /><path d="M13 1.500q4 5.500 0 11" fill="none" stroke="#777" /></svg>
      <svg width="16" height="11"><rect x=".5" y="1" width="13" height="9" rx="2" fill="none" stroke="#fff" stroke-width="1.200" /><path d="M2.500 3h7.500v5H2.500z" fill="#fff" /><path d="M15 4v3" stroke="#fff" stroke-width="1.500" /></svg>
      <div class="clock"><span>8:44 PM</span><span>7/17/2022</span></div>
      <span class="count">23</span>
    </div>
  </div>
</div>

<style>
  :global(body) { background: #f0f0f0; }
  .app {
    display: flex; flex-direction: column; min-height: 100vh;
    font-family: Roboto, "Open Sans", sans-serif; font-size: 11px; line-height: 14px; color: #000;
  }
  .app :global(*) { box-sizing: border-box; }
  .defs { position: absolute; }
  button { font: inherit; color: inherit; background: none; border: 0; padding: 0; margin: 0; }
  svg { display: block; flex: none; }
  .grow { flex: 1; }
  input, select, textarea { font: inherit; margin: 0; }

  .title { display: flex; align-items: center; height: 22px; padding: 1px 2px 0; background: #fff; font-size: 12px; }
  .title .grow { padding-left: 5px; }
  .title button { width: 46px; height: 22px; display: grid; place-items: center; }

  .menu { display: flex; align-items: center; height: 20px; padding-left: 7px; background: #fff; font-size: 12px; }
  .menu > button { padding: 2px 6px 0 7px; }
  .mdi { display: flex; gap: 2px; padding-right: 1px; }
  .mdi button { width: 18px; height: 18px; border: 1px solid #e4e4e4; display: grid; place-items: center; }

  .toolbars { display: flex; height: 31px; background: #fff; }
  .toolbar { display: flex; align-items: center; height: 31px; background: #f0f0f0; border-bottom: 1px solid #a0a0a0; border-right: 1px solid #a0a0a0; padding-left: 3px; }
  .main-tools { width: 455px; }
  .run-tools { width: 213px; }
  .toolbar button { width: 23px; height: 24px; display: grid; place-items: center; }
  .grip { width: 6px; height: 26px; background: radial-gradient(circle, #b5b5b5 1px, transparent 1px) 0 0 / 3px 4px; }
  .main-tools .grip { width: 5px; }
  .sep { width: 1px; height: 23px; background: #a0a0a0; margin: 0 3px 0 4px; }
  .status-field { width: 150px; height: 18px; margin-left: 1px; border: 1px solid; border-color: #a0a0a0 #fff #fff #a0a0a0; background: #f0f0f0; }

  main { flex: 1; display: grid; grid-template-columns: 347px minmax(0, 1fr); }
  .toolbox { display: flex; flex-direction: column; padding: 1px 4px 2px 3px; border-right: 4px solid #fff; }
  .caption { display: flex; align-items: center; height: 15px; padding: 0 4px 0 2px; gap: 6px; border: 1px solid #a0a0a0; border-radius: 2px; }
  .toolbox-body { flex: 1; background: #fff; border: 1px solid #a0a0a0; border-bottom-color: #ddd; }

  .work { display: flex; flex-direction: column; min-width: 0; padding: 0 2px; }
  .upper {
    display: grid; grid-template-columns: minmax(0, 1fr) 254px; height: 226px; padding: 6px 0 0 4px;
    box-shadow: inset 1px 1px #a0a0a0, inset 2px 2px #696969, inset 3px 3px #8c8c8c, inset 4px 4px #696969, inset 5px 6px #808080;
    border-bottom: 1px solid #fff; border-right: 2px solid #fff;
  }
  .pane { display: flex; flex-direction: column; }
  .devices { border-left: 1px solid #696969; padding-right: 3px; border-right: 1px solid #fff; }
  .preview { border-left: 2px solid #777; margin-left: 2px; padding-right: 2px; }
  .page { height: 197px; border: 2px solid #787878; border-top: 1px solid #fff; border-left: 1px solid #fff; display: flex; }
  .left { display: grid; grid-template-columns: 121px 164px; grid-auto-rows: 20px; row-gap: 11px; padding: 10px 0 0 8px; align-content: start; }
  label { display: flex; align-items: center; white-space: nowrap; }
  .indent { padding-left: 17px; }
  input[type='radio'] { appearance: none; width: 13px; height: 13px; margin: 0 2px 0 0; border: 1px solid #777; border-radius: 50%; background: #f6f6f6; }
  input[type='radio']:checked { border: 4px solid #0063b1; background: #fff; }
  .combo { display: grid; color: #555; }
  .combo select { grid-area: 1 / 1; appearance: none; width: 100%; height: 20px; border: 1px solid #e0e0e0; border-bottom-color: #c4c4c4; border-radius: 2px; background: #fbfbfb; opacity: 1; }
  .combo svg { grid-area: 1 / 1; place-self: center end; margin-right: 4px; pointer-events: none; z-index: 1; }
  .combo.off { color: #b0b0b0; }
  .combo.off select { background: #f2f2f2; border-color: #e2e2e2; }
  .combo.edge select { background: #efefef; border-color: #c0c0c0; }
  .add { grid-column: 2; margin-top: 4px; height: 21px; width: 164px; border: 1px solid #0078d4; border-radius: 4px; background: #fdfdfd; }
  .right { padding: 7px 0 0 21px; }
  .browse { display: block; width: 73px; height: 21px; border: 1px solid #e2e2e2; border-radius: 4px; background: #f5f5f5; color: #8d8d8d; font-family: "Open Sans", sans-serif; }
  fieldset { width: 308px; height: 87px; margin: 6px 0 0; padding: 14px 5px 0 7px; border: 1px solid #dcdcdc; }
  legend { padding: 0 2px; margin-left: -2px; line-height: 14px; }
  .field-row { display: flex; align-items: center; gap: 4px; height: 20px; margin-bottom: 11px; }
  .field-row label { width: 78px; justify-content: flex-end; }
  .field-row input { width: 60px; height: 20px; padding: 0 5px; border: 1px solid #e4e4e4; border-bottom-color: #868686; border-radius: 2px; background: #fff; }

  .tabs { display: flex; align-items: flex-start; padding-left: 1px; }
  .tabs button { height: 19px; padding: 1px 4px 0; white-space: nowrap; border: 1px solid #777; border-top: 0; border-right-width: 2px; border-bottom-width: 2px; border-left-color: #fff; border-radius: 0 0 3px 3px; background: #f0f0f0; }
  .tabs .on { height: 22px; margin-top: -2px; padding: 5px 6px 0; }
  .preview .tabs { padding-left: 2px; }

  .deck-pane { flex: 1; display: flex; flex-direction: column; margin-top: 4px; padding: 0 1px 1px 3px; border: 2px solid #787878; border-right: 2px solid #fff; border-bottom: 1px solid #fff; }
  .deck-frame { flex: 1; min-height: 200px; display: grid; grid-template-columns: minmax(0, 1fr) 25px; padding-left: 2px; border-top: 4px solid #f4eeee; border-right: 2px solid #787878; border-bottom: 2px solid #787878; }
  .scene { width: 100%; height: 100%; min-height: 0; background: #d6eaf3; }
  .num { font-family: "DejaVu Sans", sans-serif; font-size: 11px; fill: #000; }
  .std { font-family: "DejaVu Sans", sans-serif; font-weight: 700; fill: #c5b48a; }
  .view-tools { background: #fcfcfc; }
  .view-bar { width: 23px; padding-top: 4px; height: 397px; background: linear-gradient(90deg, #fcfcfc, #f0f0f0); display: flex; flex-direction: column; gap: 3px; }
  .view-bar button { width: 22px; height: 20px; border: 1px solid transparent; display: grid; place-items: center; }
  .view-bar .sel { border-color: #0078d4; background: #fff; }
  hr { width: 18px; height: 1px; margin: 1px 2px; border: 0; background: #bbb; }
  input[type='range'] { appearance: none; writing-mode: vertical-lr; direction: rtl; width: 16px; height: 188px; margin: 6px 0 0 2px; background: linear-gradient(#d8dbda, #d8dbda) center / 4px 100% no-repeat; }
  input[type='range']::-webkit-slider-thumb { appearance: none; width: 15px; height: 9px; background: #c8c8c8; border-radius: 5px 0 0 5px; }

  .output { display: flex; height: 214px; margin: 5px 0 1px; padding: 2px; border-top: 2px solid #777; border-bottom: 1px solid #a0a0a0; }
  .strip { width: 14px; display: flex; flex-direction: column; align-items: center; gap: 8px; padding: 4px 0 2px; border: 1px solid #a0a0a0; border-radius: 2px; }
  .strip span { margin-top: auto; writing-mode: vertical-rl; transform: rotate(180deg); line-height: 12px; }
  .log { flex: 1; min-width: 0; margin-left: 1px; display: flex; flex-direction: column; border-top: 1px solid #a0a0a0; border-left: 1px solid #a0a0a0; }
  .log-row { flex: 1; display: flex; }
  textarea { flex: 1; border: 0; resize: none; background: #fff; padding: 0; }
  .vscroll { width: 16px; display: flex; flex-direction: column; align-items: center; justify-content: space-between; padding: 6px 0; }
  .hscroll { height: 16px; display: flex; align-items: center; justify-content: space-between; padding: 0 22px 0 5px; border-bottom: 1px solid #000; }
  .log-tabs { display: flex; height: 17px; margin-bottom: 2px; }
  .cur { background: #fff; font-family: "Open Sans", sans-serif; font-weight: 700; padding: 0 4px 0 3px; }
  .todo { padding: 0 10px 0 8px; }

  .status { display: flex; align-items: center; height: 20px; padding: 0 0 0 2px; border-top: 1px solid #d8d8d8; font-family: "Open Sans", sans-serif; }
  .status i { width: 36px; height: 16px; border-left: 1px solid #d8d8d8; }

  .taskbar { display: grid; grid-template-columns: 1fr auto 1fr; height: 48px; background: #272727; color: #fff; font-family: "Open Sans", sans-serif; }
  .apps { display: flex; align-items: center; padding-left: 1px; }
  .apps button { position: relative; width: 40px; height: 40px; margin: 0 2px; border-radius: 4px; display: grid; place-items: center; }
  .apps .active { background: #363636; }
  .dot { position: absolute; bottom: 1px; left: 17px; width: 6px; height: 3px; border-radius: 2px; background: #a0a0a0; }
  .active .dot { left: 12px; width: 16px; background: #4cc2ff; }
  .badge { position: absolute; top: 3px; right: 2px; width: 16px; height: 16px; border-radius: 8px; font-size: 12px; line-height: 16px; text-align: center; }
  .gold { background: #ffb90f; }
  .dark { background: #23232f; }
  .tray { display: flex; align-items: center; justify-content: flex-end; padding-right: 18px; gap: 9px; }
  .clock { display: flex; flex-direction: column; align-items: flex-end; width: 58px; font-size: 11px; line-height: 16px; }
  .count { width: 20px; height: 16px; margin-left: -3px; border-radius: 8px; background: #4cc2ff; color: #000; text-align: center; line-height: 16px; }
</style>
